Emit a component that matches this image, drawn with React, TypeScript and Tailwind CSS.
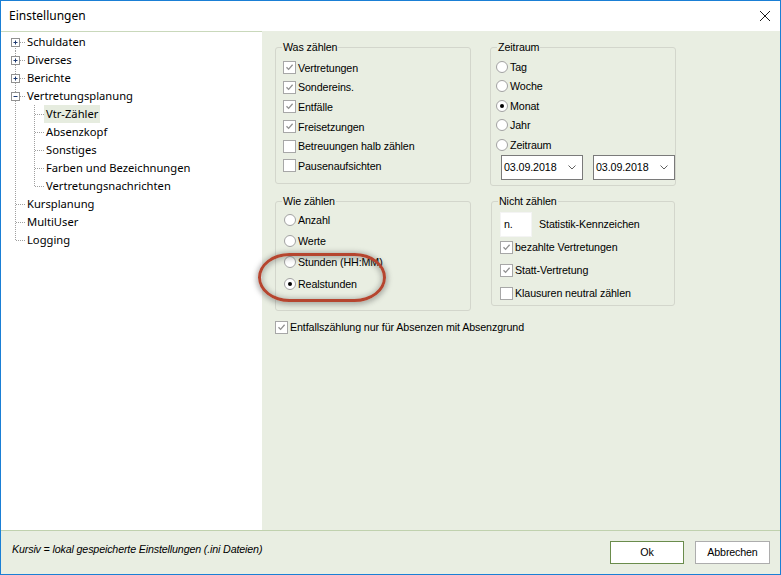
import React from "react";

const Check = ({ checked }: { checked?: boolean }) => (
  <span className="w-[13px] h-[13px] border border-[#a7a7a7] bg-white flex items-center justify-center shrink-0">
    {checked && (
      <svg width="9" height="9" viewBox="0 0 9 9">
        <path d="M1.5 4.2 L3.6 6.4 L7.6 1.8" stroke="#909090" strokeWidth="1.3" fill="none" />
      </svg>
    )}
  </span>
);

const Radio = ({ checked }: { checked?: boolean }) => (
  <span className="w-[12px] h-[12px] rounded-full border border-[#a2a2a2] bg-white flex items-center justify-center shrink-0">
    {checked && <span className="w-[4px] h-[4px] rounded-full bg-black" />}
  </span>
);

const Group = ({
  title,
  className,
  children,
}: {
  title: string;
  className: string;
  children: React.ReactNode;
}) => (
  <div className={`relative border border-[#d3d6cc] rounded-[3px] ${className}`}>
    <span className="absolute -top-[8px] left-[6px] bg-[#e9eee2] px-[1px] leading-[14px]">{title}</span>
    {children}
  </div>
);

type Row = {
  label: string;
  level: 1 | 2;
  box?: "plus" | "minus";
  first?: boolean;
  last?: boolean;
  lastChild?: boolean;
  selected?: boolean;
};

const rows: Row[] = [
  { label: "Schuldaten", level: 1, box: "plus", first: true },
  { label: "Diverses", level: 1, box: "plus" },
  { label: "Berichte", level: 1, box: "plus" },
  { label: "Vertretungsplanung", level: 1, box: "minus" },
  { label: "Vtr-Zähler", level: 2, selected: true },
  { label: "Absenzkopf", level: 2 },
  { label: "Sonstiges", level: 2 },
  { label: "Farben und Bezeichnungen", level: 2 },
  { label: "Vertretungsnachrichten", level: 2, lastChild: true },
  { label: "Kursplanung", level: 1 },
  { label: "MultiUser", level: 1 },
  { label: "Logging", level: 1, last: true },
];

const dot = { stroke: "#a0a0a0", strokeWidth: 1, strokeDasharray: "1 1" };

const Gutter = ({ r }: { r: Row }) => {
  if (r.level === 1) {
    return (
      <svg width="24" height="18" className="shrink-0">
        <line x1="14.5" y1={r.first ? 9 : 0} x2="14.5" y2={r.last ? 9.5 : 18} {...dot} />
        <line x1={r.box ? 19 : 15} y1="9.5" x2="25" y2="9.5" {...dot} />
        {r.box && (
          <g>
            <rect x="10.5" y="5.5" width="8" height="8" fill="white" stroke="#919191" />
            <line x1="12.5" y1="9.5" x2="16.5" y2="9.5" stroke="#1f3a70" />
            {r.box === "plus" && <line x1="14.5" y1="7.5" x2="14.5" y2="11.5" stroke="#1f3a70" />}
          </g>
        )}
      </svg>
    );
  }
  return (
    <svg width="43" height="18" className="shrink-0">
      <line x1="14.5" y1="0" x2="14.5" y2="18" {...dot} />
      <line x1="33.5" y1="0" x2="33.5" y2={r.lastChild ? 9.5 : 18} {...dot} />
      <line x1="34" y1="9.5" x2="43" y2="9.5" {...dot} />
    </svg>
  );
};

const Combo = () => (
  <div className="w-[83px] h-[25px] border border-[#7a7a7a] bg-white flex items-center justify-between pl-[2px] pr-[6px]">
    <span>03.09.2018</span>
    <svg width="8" height="5" viewBox="0 0 8 5">
      <path d="M0.5 0.5 L4 4 L7.5 0.5" stroke="#606060" fill="none" />
    </svg>
  </div>
);

export default function App() {
  return (
    <div className="w-[781px] h-[575px] border border-[#1a7fd5] bg-white flex flex-col overflow-hidden">
      {/* title bar */}
      <div className="h-[30px] shrink-0 flex items-center justify-between pl-[8px] pr-[9px] font-['Noto_Sans',sans-serif] text-[12px] text-black">
        <span>Einstellungen</span>
        <svg width="12" height="12" viewBox="0 0 12 12">
          <path d="M1 1 L11 11 M11 1 L1 11" stroke="#1b1b1b" strokeWidth="1" />
        </svg>
      </div>

      {/* body */}
      <div className="flex-1 flex flex-col bg-[#e9eee2]">
        <div className="h-[499px] flex">
          {/* tree */}
          <div className="w-[261px] bg-white border-t border-[#c9d8bb] pt-[1px] font-['Noto_Sans',sans-serif] text-[11.2px] text-black">
            {rows.map((r) => (
              <div key={r.label} className="h-[18px] flex items-center">
                <Gutter r={r} />
                <span
                  className={`px-[2px] leading-[18px] h-[18px] whitespace-nowrap ${
                    r.selected ? "bg-[#e6ecdf]" : ""
                  }`}
                >
                  {r.label}
                </span>
              </div>
            ))}
          </div>

          {/* content */}
          <div className="flex-1 relative pl-[13px] pt-[16px] font-['Liberation_Sans',Arial,sans-serif] text-[10.7px] tracking-[-0.1px] text-black">
            <div className="flex gap-[19px] items-start">
              <Group title="Was zählen" className="w-[196px] h-[137px] pt-[10px] pl-[7px]">
                {[
                  ["Vertretungen", true],
                  ["Sondereins.", true],
                  ["Entfälle", true],
                  ["Freisetzungen", true],
                  ["Betreuungen halb zählen", false],
                  ["Pausenaufsichten", false],
                ].map(([l, c]) => (
                  <div key={l as string} className="h-[19.6px] flex items-center gap-[2px]">
                    <Check checked={c as boolean} />
                    <span>{l as string}</span>
                  </div>
                ))}
              </Group>
              <Group title="Zeitraum" className="w-[186px] h-[139px] pt-[9px] pl-[5px]">
                {["Tag", "Woche", "Monat", "Jahr", "Zeitraum"].map((l) => (
                  <div key={l} className="h-[19.5px] flex items-center gap-[2px]">
                    <Radio checked={l === "Monat"} />
                    <span>{l}</span>
                  </div>
                ))}
                <div className="flex gap-[10px] ml-[5px]">
                  <Combo />
                  <Combo />
                </div>
              </Group>
            </div>

            <div className="flex gap-[20px] items-start mt-[15px]">
              <Group title="Wie zählen" className="w-[196px] h-[110px] pt-[7px] pl-[8px]">
                {["Anzahl", "Werte", "Stunden (HH:MM)", "Realstunden"].map((l) => (
                  <div key={l} className="h-[21.3px] flex items-center gap-[2px]">
                    <Radio checked={l === "Realstunden"} />
                    <span>{l}</span>
                  </div>
                ))}
              </Group>
              <Group title="Nicht zählen" className="w-[184px] h-[105px] pt-[10px] pl-[8px]">
                <div className="flex items-center">
                  <div className="w-[32px] h-[25px] bg-white border border-[#f4f4f4] flex items-center pl-[3px]">n.</div>
                  <span className="ml-[7px]">Statistik-Kennzeichen</span>
                </div>
                {[
                  ["bezahlte Vertretungen", true],
                  ["Statt-Vertretung", true],
                  ["Klausuren neutral zählen", false],
                ].map(([l, c], i) => (
                  <div key={l as string} className={`h-[20px] flex items-center gap-[2px] ${i > 0 ? "mt-[3px]" : ""}`}>
                    <Check checked={c as boolean} />
                    <span>{l as string}</span>
                  </div>
                ))}
              </Group>
            </div>

            <div className="h-[16px] mt-[8px] flex items-center gap-[2px]">
              <Check checked />
              <span>Entfallszählung nur für Absenzen mit Absenzgrund</span>
            </div>

            {/* red annotation ellipse */}
            <div className="absolute left-[-4px] top-[222px] w-[128px] h-[49px] rounded-[32px/25px] border-[3px] border-[#b5452f] shadow-[0_1px_5px_2px_rgba(60,60,60,0.35),inset_0_1px_5px_2px_rgba(60,60,60,0.3)]" />
          </div>
        </div>

        {/* footer */}
        <div className="h-[44px] border-t border-[#c0d1ae] flex justify-between pl-[11px] pr-[10px] font-['Liberation_Sans',Arial,sans-serif] text-[10.7px] tracking-[-0.15px] text-black">
          <span className="italic mt-[11px] leading-[14px]">Kursiv = lokal gespeicherte Einstellungen (.ini Dateien)</span>
          <div className="flex gap-[11px] mt-[10px]">
            <button className="w-[74px] h-[23px] bg-white border border-[#6a8c4c] flex items-center justify-center">Ok</button>
            <button className="w-[75px] h-[23px] bg-white border border-[#adadad] flex items-center justify-center">Abbrechen</button>
          </div>
        </div>
      </div>
    </div>
  );
}
